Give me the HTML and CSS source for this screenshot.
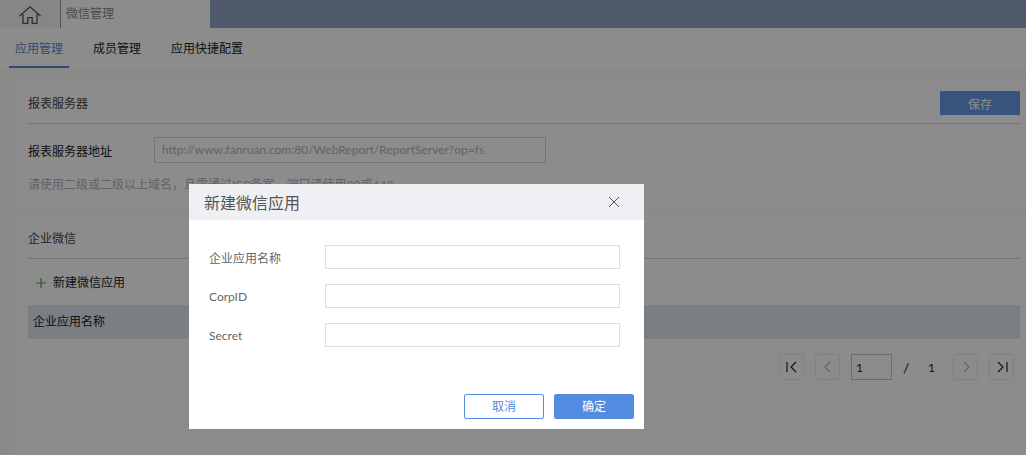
FILE: index.html
```html
<!DOCTYPE html>
<html lang="zh">
<head>
<meta charset="utf-8">
<title>微信管理</title>
<link rel="stylesheet" href="styles.css">
</head>
<body>
<div class="page">
  <header class="topbar">
    <div class="home-tab">
      <svg class="home-icon" width="22" height="18" viewBox="0 0 22 18" fill="none" stroke="#54575c" stroke-width="1.300">
        <path d="M.5 10 11 .8 21.500 10"/>
        <path d="M4 8v9.300h4.800v-5.600h4.400v5.600H18V8"/>
      </svg>
    </div>
    <div class="page-tab">微信管理</div>
  </header>
  <nav class="tabs">
    <a class="tab tab-active">应用管理</a>
    <a class="tab">成员管理</a>
    <a class="tab">应用快捷配置</a>
  </nav>
  <main class="content">
    <section class="panel panel-server">
      <div class="panel-head">
        <h2 class="panel-title panel-title-raised">报表服务器</h2>
        <button class="save-btn">保存</button>
      </div>
      <div class="server-row">
        <span class="server-label">报表服务器地址</span>
        <div class="server-input">http://www.fanruan.com:80/WebReport/ReportServer?op=fs</div>
      </div>
      <p class="server-hint">请使用二级或二级以上域名，且需通过ICP备案，端口请使用80或443</p>
    </section>
    <section class="panel panel-wechat">
      <div class="panel-head panel-head-plain">
        <h2 class="panel-title">企业微信</h2>
      </div>
      <div class="add-row">
        <svg class="plus" width="10" height="10" viewBox="0 0 10 10" stroke="#57a53f" stroke-width="1.200"><path d="M5 0v10M0 5h10"/></svg>
        <span>新建微信应用</span>
      </div>
      <div class="table-head">企业应用名称</div>
      <div class="pager">
        <span class="pg-btn"><svg width="14" height="14" viewBox="0 0 14 14" fill="none" stroke="#222" stroke-width="1.200"><path d="M2 2v10M11 2 6 7l5 5"/></svg></span>
        <span class="pg-btn"><svg width="14" height="14" viewBox="0 0 14 14" fill="none" stroke="#bbb" stroke-width="1.200"><path d="M9 2 4 7l5 5"/></svg></span>
        <span class="pg-input">1</span>
        <span class="pg-slash">/</span>
        <span class="pg-total">1</span>
        <span class="pg-btn pg-next"><svg width="14" height="14" viewBox="0 0 14 14" fill="none" stroke="#bbb" stroke-width="1.200"><path d="m5 2 5 5-5 5"/></svg></span>
        <span class="pg-btn pg-last"><svg width="14" height="14" viewBox="0 0 14 14" fill="none" stroke="#222" stroke-width="1.200"><path d="m3 2 5 5-5 5M12 2v10"/></svg></span>
      </div>
    </section>
  </main>
</div>
<div class="overlay"></div>
<div class="dialog">
  <div class="dialog-head">
    <span class="dialog-title">新建微信应用</span>
    <svg class="dialog-close" width="12" height="12" viewBox="0 0 12 12" stroke="#555" stroke-width="1"><path d="m1 1 10 10M11 1 1 11"/></svg>
  </div>
  <div class="dialog-body">
    <label class="field"><span class="field-label">企业应用名称</span><input class="field-input" type="text"></label>
    <label class="field"><span class="field-label">CorpID</span><input class="field-input" type="text"></label>
    <label class="field"><span class="field-label">Secret</span><input class="field-input" type="text"></label>
  </div>
  <div class="dialog-foot">
    <button class="btn btn-ghost">取消</button>
    <button class="btn btn-primary">确定</button>
  </div>
</div>
</body>
</html>
```
FILE: styles.css
```css
* { box-sizing: border-box; }
html, body {
  margin: 0;
  height: 455px;
  overflow: hidden;
  background: #fff;
  font-family: "Lato", "Noto Sans CJK SC", sans-serif;
  font-size: 12px;
  color: #333;
}
.page { display: flex; flex-direction: column; height: 455px; }
.topbar { display: flex; height: 28px; background: #8fa3c4; flex: none; }
.home-tab {
  width: 61px;
  background: #f0f4f8;
  border-right: 1px solid #9a9a9a;
  display: flex;
  align-items: flex-start;
  justify-content: center;
  padding: 6px 1px 0 0;
}
.page-tab {
  width: 149px;
  background: #fff;
  padding: 6px 0 0 5px;
  color: #8a8a8a;
  line-height: 16px;
}
.tabs { display: flex; height: 40px; flex: none; padding-left: 9px; background: #fff; }
.tab {
  height: 40px;
  width: 60px;
  line-height: 41px;
  text-align: center;
  margin-right: 18px;
  color: #222;
  border-bottom: 2px solid transparent;
}
.tab + .tab + .tab { width: 72px; margin-left: 6px; }
.tab-active { color: #5a86d6; border-bottom-color: #5a86d6; }
.content { flex: 1; background: #fbfbfb; padding: 17px 0 0 14px; }
.panel { background: #fff; padding: 0 6px 0 14px; }
.panel-server { height: 120px; margin-bottom: 12px; }
.panel-wechat { height: 240px; }
.panel-head {
  height: 39px;
  padding: 0 0 2px;
  display: flex;
  align-items: center;
  justify-content: space-between;
  border-bottom: 1px solid #d5d5d5;
}
.panel-head-plain { height: 42px; padding: 0; }
.panel-title { margin: 0; font-size: 12px; font-weight: 400; color: #444; }
.panel-title-raised { margin-bottom: 2px; }
.save-btn {
  width: 80px;
  height: 24px;
  border: 0;
  padding: 0;
  background: #6499e8;
  color: #fff;
  font: inherit;
}
.server-row { display: flex; align-items: center; margin-top: 13px; height: 26px; }
.server-label { width: 126px; color: #222; }
.server-input {
  width: 392px;
  height: 26px;
  border: 1px solid #d5d5d5;
  padding-left: 7px;
  line-height: 24px;
  color: #b5b5b5;
}
.server-hint { margin: 14px 0 0; line-height: 16px; color: #b5b5b5; }
.add-row { display: flex; align-items: center; height: 24px; margin-top: 10px; color: #222; padding-left: 8px; }
.plus { margin-right: 7px; margin-top: 3px; }
.table-head { height: 34px; margin-top: 12px; padding: 0 0 1px 5px; line-height: 33px; background: #dee7f0; color: #222; }
.pager { display: flex; align-items: center; height: 26px; margin-top: 15px; padding-left: 751px; }
.pager > * { flex: none; }
.pg-btn {
  width: 25px;
  height: 26px;
  margin-right: 11px;
  border: 1px solid #ececec;
  border-radius: 2px;
  display: flex;
  align-items: center;
  justify-content: center;
}
.pg-last { margin-right: 0; }
.pg-input {
  width: 41px;
  height: 26px;
  border: 1px solid #c6c6c6;
  padding-left: 4px;
  line-height: 26px;
  color: #222;
}
.pg-slash { width: 20px; margin-left: 11px; color: #222; font-size: 14px; }
.pg-total { width: 26px; color: #222; padding-left: 5px; }
.pg-next { margin-left: 4px; }
.overlay { position: fixed; inset: 0; background: rgba(0, 0, 0, 0.45); }
.dialog {
  position: fixed;
  left: 189px;
  top: 184px;
  width: 455px;
  height: 245px;
  background: #fff;
  display: flex;
  flex-direction: column;
}
.dialog-head {
  height: 36px;
  flex: none;
  background: #eff0f4;
  display: flex;
  align-items: center;
  justify-content: space-between;
  padding: 0 24px 0 15px;
}
.dialog-title { font-size: 16px; color: #555; }
.dialog-body { flex: 1; padding: 25px 24px 0 20px; display: flex; flex-direction: column; gap: 15px; }
.field { display: flex; align-items: center; height: 24px; }
.field-label { width: 116px; color: #666; }
.field-input { width: 295px; height: 24px; border: 1px solid #dadfe2; background: #fff; padding: 0 6px; outline: 0; }
.dialog-foot { display: flex; justify-content: flex-end; gap: 10px; padding: 0 10px 10px 0; }
.btn { width: 80px; height: 25px; border-radius: 2px; padding: 0 0 2px; font: inherit; }
.btn-ghost { background: #fff; border: 1px solid #528be0; color: #528be0; }
.btn-primary { background: #528be0; border: 1px solid #528be0; color: #fff; }
```
